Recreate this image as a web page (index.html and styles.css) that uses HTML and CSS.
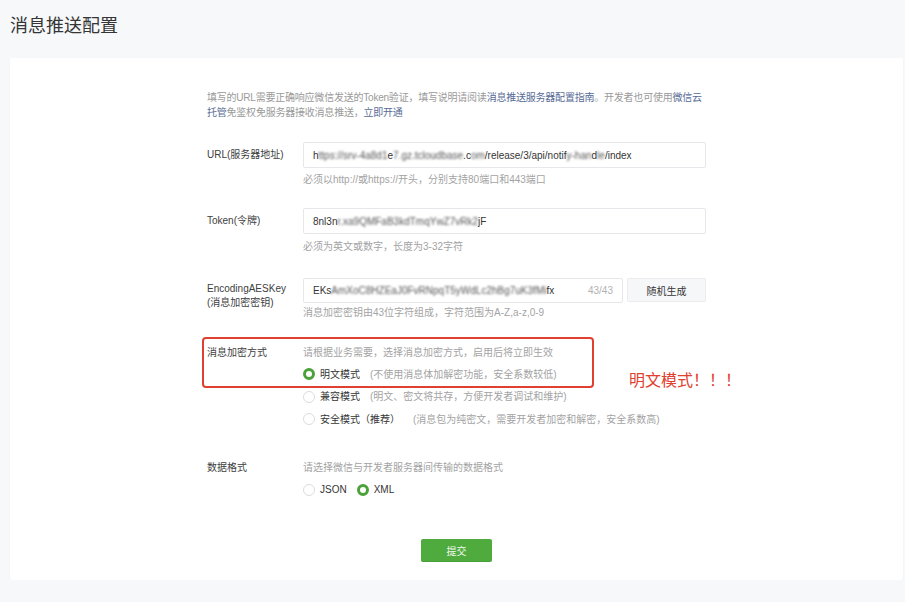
FILE: index.html
```html
<!DOCTYPE html>
<html lang="zh-CN">
<head>
<meta charset="utf-8">
<title>消息推送配置</title>
<link rel="stylesheet" href="styles.css">
</head>
<body>
<h1 class="title">消息推送配置</h1>
<div class="card">
  <div class="form">
    <div class="intro">
      <div class="intro-line">填写的URL需要正确响应微信发送的Token验证，填写说明请阅读<a class="link">消息推送服务器配置指南</a>。开发者也可使用<a class="link">微信云</a></div>
      <div class="intro-line"><a class="link">托管</a>免鉴权免服务器接收消息推送，<a class="link">立即开通</a></div>
    </div>

    <div class="row row-url">
      <div class="label label-input">URL(服务器地址)</div>
      <div class="field">
        <div class="input"><span class="val">h<span class="blur">ttps://srv-4a8d1</span>e<span class="blur">7.gz.tcloudbase</span>.c<span class="blur">om</span>/release/3/api/notif<span class="blur">y-han</span>d<span class="blur">le</span>/index</span></div>
        <div class="hint">必须以http://或https://开头，分别支持80端口和443端口</div>
      </div>
    </div>

    <div class="row row-token">
      <div class="label label-input">Token(令牌)</div>
      <div class="field">
        <div class="input"><span class="val">8nl3n<span class="blur">r.xa9QMFaB3kdTmqYwZ7vRk2</span>jF</span></div>
        <div class="hint">必须为英文或数字，长度为3-32字符</div>
      </div>
    </div>

    <div class="row row-key">
      <div class="label label-two">EncodingAESKey<br>(消息加密密钥)</div>
      <div class="field">
        <div class="key-line">
          <div class="input input-key"><span class="val">EKs<span class="blur">AmXoC8HZEaJ0FvRNpqT5yWdLc2hBg7uK3fMi</span>fx</span><span class="count">43/43</span></div>
          <button class="btn-gen" type="button">随机生成</button>
        </div>
        <div class="hint hint-key">消息加密密钥由43位字符组成，字符范围为A-Z,a-z,0-9</div>
      </div>
    </div>

    <div class="row row-mode">
      <div class="mark"></div>
      <div class="mark-text">明文模式！！！</div>
      <div class="label">消息加密方式</div>
      <div class="field">
        <div class="desc">请根据业务需要，选择消息加密方式，启用后将立即生效</div>
        <div class="radios-v">
          <label class="radio"><span class="dot on"></span><span class="rname">明文模式</span><span class="rdesc">(不使用消息体加解密功能，安全系数较低)</span></label>
          <label class="radio"><span class="dot"></span><span class="rname">兼容模式</span><span class="rdesc">(明文、密文将共存，方便开发者调试和维护)</span></label>
          <label class="radio"><span class="dot"></span><span class="rname">安全模式（推荐）</span><span class="rdesc">(消息包为纯密文，需要开发者加密和解密，安全系数高)</span></label>
        </div>
      </div>
    </div>

    <div class="row row-fmt">
      <div class="label">数据格式</div>
      <div class="field">
        <div class="desc">请选择微信与开发者服务器间传输的数据格式</div>
        <div class="radios-h">
          <label class="radio"><span class="dot"></span><span class="rname">JSON</span></label>
          <label class="radio"><span class="dot on"></span><span class="rname">XML</span></label>
        </div>
      </div>
    </div>

    <div class="actions">
      <button class="btn-submit" type="button">提交</button>
    </div>
  </div>
</div>
</body>
</html>
```
FILE: styles.css
```css
html, body {
  margin: 0;
  padding: 0;
  background: #f7f8fa;
  font-family: "Liberation Sans", "Noto Sans CJK SC", sans-serif;
  color: #353535;
}
.title {
  margin: 0;
  padding: 15px 0 0 10px;
  height: 44px;
  box-sizing: border-box;
  font-size: 18px;
  font-weight: normal;
  line-height: 22px;
  color: #353535;
}
.card {
  margin: 14px 2px 0 10px;
  background: #fff;
  border-radius: 2px;
  box-shadow: 0 1px 2px rgba(0,0,0,0.05);
  padding: 32px 0 21px 197px;
  height: 522px;
  box-sizing: border-box;
}
.form {
  width: 499px;
  font-size: 10px;
  line-height: 15px;
}
.intro {
  color: #9a9a9a;
  letter-spacing: -0.22px;
}
.intro-line {
  white-space: nowrap;
}
.link {
  color: #576b95;
  text-decoration: none;
}
.row {
  display: flex;
  position: relative;
}
.label {
  width: 96px;
  flex: none;
  color: #3e3e3e;
}
.label-input {
  line-height: 26px;
}
.label-two {
  line-height: 14px;
  padding-top: 4px;
}
.field {
  flex: 1;
  min-width: 0;
}
.input {
  height: 26px;
  box-sizing: border-box;
  border: 1px solid #e7e7eb;
  border-radius: 2px;
  padding: 0 9px;
  display: flex;
  align-items: center;
  color: #353535;
  white-space: nowrap;
  overflow: hidden;
}
.val {
  flex: 1;
  overflow: hidden;
}
.blur {
  filter: blur(0.8px);
  color: #555;
}
.hint {
  margin-top: 4px;
  color: #a3a3a3;
}
.row-url { margin-top: 22px; }
.row-token { margin-top: 21px; }
.row-token .hint { margin-top: 5px; }
.row-key { margin-top: 24px; }
.key-line {
  display: flex;
  gap: 4px;
}
.input-key {
  width: 320px;
  flex: none;
  height: 25px;
}
.count {
  color: #b2b2b2;
  margin-left: 8px;
}
.btn-gen {
  flex: 1;
  height: 24px;
  border: 1px solid #ececee;
  border-radius: 2px;
  background: #f6f7f9;
  font-family: inherit;
  font-size: 10px;
  color: #353535;
  padding: 0;
}
.hint-key { margin-top: 2px; }
.row-mode { margin-top: 25px; }
.mark {
  position: absolute;
  left: -5px;
  top: -8px;
  width: 392px;
  height: 51px;
  box-sizing: border-box;
  border: 2px solid #e0402f;
  border-radius: 4px;
  pointer-events: none;
}
.mark-text {
  position: absolute;
  left: 422px;
  top: 26px;
  font-size: 16px;
  line-height: 20px;
  color: #e0402f;
  white-space: nowrap;
}
.desc {
  color: #a3a3a3;
}
.radios-v {
  margin-top: 3px;
  display: flex;
  flex-direction: column;
}
.radio {
  display: flex;
  align-items: center;
  height: 22.5px;
}
.dot {
  width: 12px;
  height: 12px;
  box-sizing: border-box;
  border: 1px solid #dcdcdc;
  border-radius: 50%;
  background: #fff;
  margin-right: 5px;
  flex: none;
}
.dot.on {
  border: 3px solid #4ba13a;
}
.rname {
  color: #353535;
  margin-right: 10px;
}
.rdesc {
  color: #a3a3a3;
}
.radios-v .radio:nth-child(3) .rname { margin-right: 13px; }
.row-fmt { margin-top: 29px; }
.radios-h {
  display: flex;
  margin-top: 4px;
}
.radios-h .rname { margin-right: 10px; }
.actions {
  margin-top: 38px;
  display: flex;
  justify-content: center;
}
.btn-submit {
  width: 71px;
  height: 22px;
  border: 0;
  border-radius: 2px;
  background: #4fab3e;
  box-shadow: 0 1px 0 #47a035;
  color: #f0f8ee;
  font-family: inherit;
  font-size: 10px;
  padding: 0;
}
```
